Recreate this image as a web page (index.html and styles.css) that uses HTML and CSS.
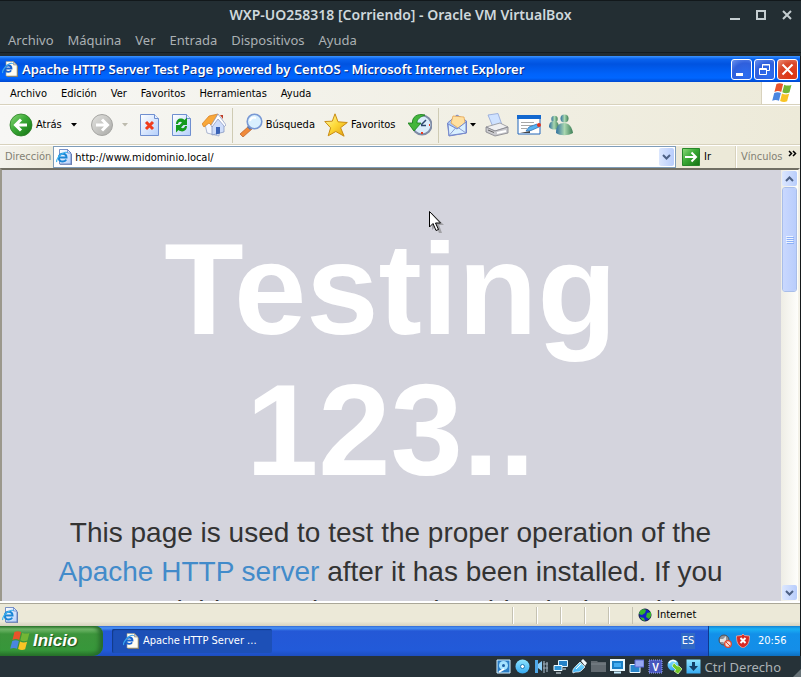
FILE: index.html
```html
<!DOCTYPE html>
<html lang="es">
<head>
<meta charset="utf-8">
<title>WXP-UO258318 [Corriendo] - Oracle VM VirtualBox</title>
<link rel="stylesheet" href="styles.css">
</head>
<body>
<svg class="defs" aria-hidden="true">
  <defs>
    <linearGradient id="green" x1="0" y1="0" x2="1" y2="1"><stop offset="0" stop-color="#8fdc7c"/><stop offset=".45" stop-color="#3aa936"/><stop offset="1" stop-color="#137012"/></linearGradient>
    <linearGradient id="grey" x1="0" y1="0" x2="1" y2="1"><stop offset="0" stop-color="#e4e4e1"/><stop offset="1" stop-color="#a9a9a6"/></linearGradient>
    <linearGradient id="paper" x1="0" y1="0" x2="1" y2="1"><stop offset="0" stop-color="#fff"/><stop offset="1" stop-color="#b5d0fb"/></linearGradient>
    <linearGradient id="gold" x1="0" y1="0" x2="1" y2="1"><stop offset="0" stop-color="#fffdb0"/><stop offset=".5" stop-color="#fdd835"/><stop offset="1" stop-color="#e09a10"/></linearGradient>
    <linearGradient id="buddy" x1="0" y1="0" x2="1" y2="0"><stop offset="0" stop-color="#2f6f9e"/><stop offset=".5" stop-color="#a9d7b0"/><stop offset="1" stop-color="#3c7d55"/></linearGradient>
    <linearGradient id="sky" x1="0" y1="0" x2="0" y2="1"><stop offset="0" stop-color="#8fe4ff"/><stop offset="1" stop-color="#35aaf2"/></linearGradient>
  </defs>
  <symbol id="flag" viewBox="1 1 18 18">
    <path fill="#e8532a" d="M5 2c2-1.300 4-1 6 0L9.300 9C7.300 8 5.300 8 3.200 9z"/>
    <path fill="#72b635" d="M12 2.500c2 1 4 1.200 6.500.2L16.700 9.500c-2.400 1-4.300.8-6.400-.2z"/>
    <path fill="#4a86e0" d="M3 10c2-1 4-1 6 0l-1.700 7c-2-1-4-1-6.100 0z"/>
    <path fill="#f8c425" d="M10 10.400c2 1 4 1.200 6.400.2l-1.800 6.900c-2.300 1-4.200.7-6.300-.3z"/>
  </symbol>
  <symbol id="iepage" viewBox="0 0 16 16">
    <path fill="#7c7a70" d="M5 15h10V5h1v11H5z"/>
    <path fill="#fffef4" stroke="#9a9a88" stroke-width=".6" d="M4 .5h7.500L15 4v11H4z"/>
    <path fill="#c8c8c8" stroke="#777" stroke-width=".5" d="M11.500.5V4H15z"/>
    <path fill="none" stroke="#1762d0" stroke-width="1.800" d="M3 7.500h6.500c0-1.800-1.200-3-3.200-3S3 5.800 3 7.700s1.400 3.200 3.300 3.200c1.300 0 2.300-.5 2.800-1.500"/>
    <path fill="none" stroke="#39a5ee" stroke-width="1.200" d="M.8 12C-.4 10.500 3 5.500 6.500 3.300c2.300-1.300 3.800-1.300 4.200-.5"/>
  </symbol>
  <symbol id="ieblue" viewBox="0 0 16 16">
    <path fill="#6f82ac" d="M4 15.200h11V5h1v11H4z"/>
    <path fill="url(#paper)" stroke="#5877bd" stroke-width=".8" d="M3.500.5h8L15 4v11H3.500z"/>
    <path fill="#dceaff" stroke="#5877bd" stroke-width=".7" d="M11.500.5V4H15z"/>
    <path fill="none" stroke="#1b86d6" stroke-width="2" d="M3 8.500h7.500c0-2.400-1.600-3.700-3.700-3.700S2.800 6.300 2.800 8.700s1.700 3.800 4 3.800c1.600 0 2.800-.7 3.400-1.900"/>
    <path fill="none" stroke="#3fb4ef" stroke-width="1.200" d="M.8 13C-.2 11 3 6.500 7 4.300c2.300-1.300 4-1.300 4.400-.5"/>
  </symbol>
</svg>

<header class="host-head">
  <div class="host-title">
    <h1>WXP-UO258318 [Corriendo] - Oracle VM VirtualBox</h1>
    <div class="host-controls">
      <button aria-label="Minimizar"><svg width="12" height="12"><path d="M1 9h10v2H1z" fill="#c5ced1"/></svg></button>
      <button aria-label="Maximizar"><svg width="12" height="12"><path d="M2 2h8v8H2z" fill="none" stroke="#c5ced1" stroke-width="2"/></svg></button>
      <button aria-label="Cerrar"><svg width="12" height="12"><path d="M2 2l8 8M10 2l-8 8" stroke="#c5ced1" stroke-width="2"/></svg></button>
    </div>
  </div>
  <nav class="host-menu">
    <button>Archivo</button><button>Máquina</button><button>Ver</button><button>Entrada</button><button>Dispositivos</button><button>Ayuda</button>
  </nav>
</header>

<main class="xp">
  <div class="xp-title">
    <svg width="16" height="16"><use href="#iepage"/></svg>
    <h2>Apache HTTP Server Test Page powered by CentOS - Microsoft Internet Explorer</h2>
    <div class="xp-controls">
      <button aria-label="Minimizar ventana"><svg width="21" height="21"><path d="M5 14h7v3H5z" fill="#fff"/></svg></button>
      <button aria-label="Restaurar ventana"><svg width="21" height="21"><path d="M5.500 9.500h7v6h-7zM5 10.500h8M8.500 9V5.500h7v6H13M8 6h8" fill="none" stroke="#fff"/></svg></button>
      <button class="close" aria-label="Cerrar ventana"><svg width="21" height="21"><path d="M5.500 5.500l10 10M15.500 5.500l-10 10" stroke="#fff" stroke-width="2"/></svg></button>
    </div>
  </div>

  <div class="menubar">
    <nav><button>Archivo</button><button>Edición</button><button>Ver</button><button>Favoritos</button><button>Herramientas</button><button>Ayuda</button></nav>
    <div class="throbber"><svg width="20" height="20"><use href="#flag"/></svg></div>
  </div>

  <div class="toolbar">
    <button class="tool"><svg width="24" height="24"><circle cx="12" cy="12" r="11" fill="url(#green)" stroke="#287c22" stroke-width=".8"/><path d="M18 12H7M12 6.500L6.500 12l5.500 5.500" fill="none" stroke="#fff" stroke-width="3"/></svg>Atrás</button>
    <button class="drop" aria-label="Historial atrás"><svg width="7" height="4"><path d="M0 0h6L3 3.500z"/></svg></button>
    <button class="tool fwd" aria-label="Adelante"><svg width="24" height="24"><circle cx="12" cy="12" r="10.500" fill="url(#grey)" stroke="#a5a5a2"/><path d="M6 12h11M12 6.500l5.500 5.500-5.500 5.500" fill="none" stroke="#fff" stroke-width="3"/></svg></button>
    <button class="drop off" aria-label="Historial adelante"><svg width="7" height="4"><path d="M0 0h6L3 3.500z" fill="#bdbbae"/></svg></button>
    <div class="group">
      <button class="tool" aria-label="Detener"><svg width="24" height="24"><path d="M2.500 1.500h14l4 4v17h-18z" fill="url(#paper)" stroke="#6f8fd0"/><path d="M16.500 1.500v4h4" fill="#e7f0ff" stroke="#6f8fd0"/><path d="M8 9l7 7M15 9l-7 7" stroke="#f03c1c" stroke-width="3"/></svg></button>
      <button class="tool" aria-label="Actualizar"><svg width="24" height="24"><path d="M2.500 1.500h14l4 4v17h-18z" fill="url(#paper)" stroke="#6f8fd0"/><path d="M16.500 1.500v4h4" fill="#e7f0ff" stroke="#6f8fd0"/><path d="M6 11c0-5 5-7 8.500-4L17 4.500V12H9.500L12 9.500c-2-1.500-3.500-.5-4 1.500zM17 13c0 5-5 7-8.500 4L6 19.500V12h7.500L11 14.500c2 1.500 3.500.5 4-1.500z" fill="#149a1d"/></svg></button>
      <button class="tool" aria-label="Inicio"><svg width="24" height="24"><path d="M3 11l4-6 10 6v12l-12-3z" fill="#f5f8ff" stroke="#8e9cc0" stroke-width=".7"/><path d="M10 22V12l6-7 6 7v7z" fill="#cfddfa" stroke="#7a8cba" stroke-width=".7"/><path d="M0 11L7 3l9-2-6 12-3-3-5 4z" fill="#f9a83a" stroke="#d37a1c" stroke-width=".7"/><path d="M16 1l8 11-1.500 1.500L16 6l-6 8-1-1.500z" fill="#fff" stroke="#8794bd" stroke-width=".7"/><path d="M14 14h4v6.500l-4 1z" fill="#3a62b6"/><path d="M18 2h3v4z" fill="#bd3d27"/></svg></button>
    </div>
    <span class="rule"></span>
    <button class="tool search"><svg width="24" height="24"><path d="M10 13l3 3-9 8-3-3z" fill="#f08a3a" stroke="#b95c26" stroke-width=".7"/><path d="M9 13l3 3" stroke="#6078a8" stroke-width="3"/><circle cx="15.500" cy="8.500" r="7.300" fill="#d9f0ff" stroke="#7898d4" stroke-width="1.600"/><path d="M11 8c.5-3 3-4 6-3" fill="none" stroke="#fff" stroke-width="2"/></svg>Búsqueda</button>
    <button class="tool star"><svg width="24" height="24"><path d="M11 .8l3 8 9.300.7-6.700 5.200 3.500 8.500-8.300-4.700-7.600 4.300 2.400-8L.8 8.500l7.500-.3z" fill="url(#gold)" stroke="#c98b12"/></svg>Favoritos</button>
    <button class="tool" aria-label="Historial"><svg width="24" height="24"><circle cx="14" cy="12" r="9.500" fill="#d9ecfb" stroke="#7f8ba5" stroke-width="2"/><path d="M13 12l5-5M13 12.500h5" stroke="#2c476e" stroke-width="1.500"/><path d="M14 19v2M21 12h1" stroke="#e83a20" stroke-width="2"/><path d="M17 2C9 0 4 4 4.500 10H0l6 8 7-8H9c0-4 3-6 8-8z" fill="#43b63c" stroke="#187d1b" stroke-width=".8"/></svg></button>
    <span class="rule"></span>
    <button class="tool" aria-label="Correo"><svg width="24" height="24"><path d="M2.500 10L12 2l9.500 6v12L4 23z" fill="#a9c8f7" stroke="#7385c9"/><path d="M6 10l2-7 11 1 1 6-7 5z" fill="#ffe0a0" stroke="#e6a552" stroke-width=".8"/><path d="M3 11l9 5 9-7v11L4 22.500z" fill="#d9f0ff" stroke="#7688cc"/><path d="M4 22.500l7-8M21 20l-8-5.500" stroke="#8b9ad0"/></svg></button>
    <button class="drop mail" aria-label="Opciones de correo"><svg width="7" height="4"><path d="M0 0h6L3 3.500z"/></svg></button>
    <div class="group">
      <button class="tool" aria-label="Imprimir"><svg width="24" height="24"><path d="M3 2l10-1.500L17 12l-9 2z" fill="#cfe2ff" stroke="#8fa5d8" stroke-width=".8"/><path d="M1 14l14-4 8 4-13 4z" fill="#f0f0f1" stroke="#8f8f96" stroke-width=".8"/><path d="M1 14v5l9 4 13-3v-6l-13 4z" fill="#c9c9cd" stroke="#828289" stroke-width=".8"/><path d="M12 20l9-2" stroke="#fff" stroke-width="2"/><path d="M3 17l6 2.500" stroke="#666"/></svg></button>
      <button class="tool" aria-label="Editar"><svg width="24" height="24"><path d="M1 3h22v18H1z" fill="#fff" stroke="#2266ba"/><path d="M0 2h24v4H0z" fill="#1368cf"/><path d="M4 9.500h13M4 12.500h12M4 15.500h6" stroke="#a7a7a7"/><path d="M3 20h10v-2z" fill="#444"/><path d="M9 18l3-4 8-3 2 3-8 3.500z" fill="#58b1ef" stroke="#2366af" stroke-width=".7"/><circle cx="22" cy="12" r="2" fill="#df3721"/></svg></button>
      <button class="tool" aria-label="Messenger"><svg width="24" height="24"><circle cx="5.500" cy="6" r="3.200" fill="url(#buddy)"/><path d="M0 14c0-4 2-6 5-6 4 0 5 3 5 8-4 1-8 1-10-2z" fill="url(#buddy)"/><circle cx="15.500" cy="5.500" r="4" fill="url(#buddy)"/><path d="M7 20c0-7 3-10 8-10s8 4 9 10c-5 3-13 3-17 0z" fill="url(#buddy)"/></svg></button>
    </div>
  </div>

  <form class="address" onsubmit="return false">
    <label for="url">Dirección</label>
    <div class="combo">
      <svg width="16" height="16"><use href="#ieblue"/></svg>
      <input id="url" type="text" value="http://www.midominio.local/">
      <button class="arrow-btn" type="button" aria-label="Desplegar direcciones"><svg width="9" height="6"><path d="M1 1l3.500 3.500L8 1" fill="none" stroke="#4d6185" stroke-width="2"/></svg></button>
    </div>
    <button class="go"><svg width="18" height="18"><path d="M.5.500h17v17H.5z" fill="url(#green)" stroke="#26872a"/><path d="M3 9h11M9.500 4.500L14 9l-4.500 4.500" fill="none" stroke="#fff" stroke-width="2"/></svg>Ir</button>
    <button class="links" type="button">Vínculos <svg width="9" height="7"><path d="M1 1l2.500 2.500L1 6M5 1l2.500 2.500L5 6" fill="none" stroke="#000" stroke-width="1.500"/></svg></button>
  </form>

  <div class="view">
    <article class="page">
      <h1>Testing 123..</h1>
      <p>This page is used to test the proper operation of the <a href="#">Apache HTTP server</a> after it has been installed. If you can read this page it means that this site is working</p>
    </article>
    <div class="scroll">
      <button class="arrow-btn" aria-label="Subir"><svg width="9" height="6"><path d="M1 5l3.500-3.500L8 5" fill="none" stroke="#4d6185" stroke-width="2"/></svg></button>
      <div class="thumb"><svg width="8" height="8"><path d="M0 .5h7M0 2.500h7M0 4.500h7M0 6.500h7" stroke="#eef4fe"/><path d="M1 1.500h7M1 3.500h7M1 5.500h7M1 7.500h7" stroke="#8cb0f8"/></svg></div>
      <button class="arrow-btn last" aria-label="Bajar"><svg width="9" height="6"><path d="M1 1l3.500 3.500L8 1" fill="none" stroke="#4d6185" stroke-width="2"/></svg></button>
    </div>
    <svg class="pointer" width="18" height="24"><path d="M4 3v17l4-4 3 7h3l-3-8h5z" fill="#7778" /><path d="M1.500 1.500v15.500l3.500-3.500 3 7 2.500-1-3-6.500h5z" fill="#fff" stroke="#000"/></svg>
  </div>

  <div class="status">
    <svg width="16" height="16"><use href="#ieblue"/></svg>
    <div class="cells"><i></i><i></i><i></i><i></i><i></i></div>
    <div class="zone"><svg width="14" height="14"><circle cx="7" cy="7" r="6" fill="#1420c8" stroke="#111844"/><path d="M2 3c2-2 5-2 6-1L7 5 4 7 1 6zM9 5l4-1v4l-2 3-3-2zM2 9l4 1 1 3-3-1z" fill="#37b52f"/></svg>Internet</div>
  </div>

  <div class="taskbar">
    <button class="start"><svg width="20" height="20"><use href="#flag"/></svg>Inicio</button>
    <button class="task"><svg width="16" height="16"><use href="#iepage"/></svg>Apache HTTP Server ...</button>
    <button class="lang">ES</button>
    <div class="tray">
      <svg width="14" height="14"><circle cx="6" cy="6" r="5" fill="#8f9298" stroke="#4d4f55"/><path d="M2 5h3l3-3v8L5 8H2z" fill="#e3e3e3"/><circle cx="10" cy="10" r="3.300" fill="#f7d9d3" stroke="#e0472e" stroke-width="1.300"/><path d="M8 8l4 4" stroke="#e0472e"/></svg>
      <svg width="14" height="14"><path d="M7 0l1.500 1.500 5 .5c0 6-1 9.500-6.500 12C1.500 11.500.5 8 .5 2l5-.5z" fill="#d92a24" stroke="#e9b0a8" stroke-width=".8"/><path d="M4.500 4l5 5M9.500 4l-5 5" stroke="#fff" stroke-width="2"/></svg>
      <time>20:56</time>
    </div>
  </div>
</main>

<footer class="host-status">
  <svg width="15" height="15"><path d="M1 1h13v13H1z" fill="#2a7cc4" stroke="#d5f2ff"/><circle cx="7.500" cy="6.500" r="4.500" fill="#a5e2ff"/><circle cx="7.500" cy="6.500" r="1.500" fill="#1d60a5"/><path d="M3 13l5-3" stroke="#fff" stroke-width="2"/></svg>
  <svg width="15" height="15"><circle cx="7.500" cy="7.500" r="7" fill="url(#sky)"/><circle cx="7.500" cy="7.500" r="2" fill="#fff" stroke="#1c77b4"/></svg>
  <svg width="15" height="15"><path d="M1 1h3v13H1z" fill="#4fa8e8"/><path d="M4 5l4-3v10L4 9z" fill="#8dcff8"/><path d="M9 2h2v12H9zM12 3h2v10h-2z" fill="#6c7b86"/><path d="M9 5h5M9 9h5" stroke="#9aabb6"/></svg>
  <svg width="15" height="15"><path d="M5.500 1.500h9v6h-9z" fill="#2581c6" stroke="#def5ff"/><path d="M1 6.500h8v5H1zM3 14h5" fill="#2e96da" stroke="#eefaff"/><path d="M10 10h3" stroke="#def5ff"/></svg>
  <svg width="15" height="15"><path d="M1 14c-1-3 1-5 3-7l4-4 5 5-4 4c-3 2-5 0-8 2z" fill="url(#sky)" stroke="#fff" stroke-width=".7"/><path d="M9 2l2-2 4 4-2 3z" fill="#f2f8fb"/><path d="M4 10l5-5" stroke="#fff"/></svg>
  <svg width="15" height="15"><path d="M0 2h6l1 1h8v10H0z" fill="#626a70"/><path d="M0 5h15" stroke="#7c858b"/></svg>
  <svg width="15" height="15"><path d="M1 1h13v10H1z" fill="#1a7fc5" stroke="#eaf9ff" stroke-width="2"/><path d="M4 4h7v4H4z" fill="#43adf0"/><path d="M4 13.500h7" stroke="#c8efff" stroke-width="2"/></svg>
  <svg width="15" height="15"><path d="M1 5.500h10v8H1z" fill="#2785cc" stroke="#eefaff"/><path d="M6 1h9v7H6z" fill="#98a8f1" stroke="#5667d4"/></svg>
  <svg width="15" height="15"><path d="M1 1h13v13H1z" fill="#4856bd" stroke="#9eacfa" stroke-dasharray="1 1"/><text x="7.500" y="11.500" text-anchor="middle" class="chip">V</text></svg>
  <svg width="15" height="15"><circle cx="6" cy="6" r="5.500" fill="url(#sky)"/><path d="M2 4c2-3 5-3 7-1" fill="none" stroke="#fff" stroke-width="1.500"/><path d="M7 4l3 3h2l3 3-4 5-4-3 2-1-4-4z" fill="#72c827" stroke="#e8ffd7" stroke-width=".7"/></svg>
  <svg width="15" height="15"><path d="M.5.500h14v14H.5z" fill="url(#sky)"/><path d="M6 3h3v4h3l-4.500 5L3 7h3z" fill="#123e66"/></svg>
  <span>Ctrl Derecho</span>
  <svg class="grip" width="8" height="8"><path d="M8 0v8H0z" fill="#677277"/></svg>
</footer>
</body>
</html>
```
FILE: styles.css
```css
* { box-sizing: border-box; }
body {
  margin: 0;
  height: 100vh;
  display: flex;
  flex-direction: column;
  overflow: hidden;
  background: #232e33;
  font: 11px/14px "DejaVu Sans Condensed", "Liberation Sans", sans-serif;
  color: #000;
}
h1, h2, p { margin: 0; font: inherit; }
button { border: 0; padding: 0; margin: 0; background: none; font: inherit; color: inherit; white-space: nowrap; }
svg { display: block; flex: none; }
.defs { position: absolute; width: 0; height: 0; }

/* VirtualBox window */
.host-head { flex: none; height: 56px; border-top: 1px solid #12181b; border-bottom: 3px solid #222c31; font-family: "Noto Sans", sans-serif; }
.host-title { display: grid; grid-template-columns: 1fr auto 1fr; align-items: center; height: 27px; color: #cfd8dc; }
.host-title h1 { grid-column: 2; font-size: 14px; font-weight: 600; line-height: 20px; }
.host-controls { display: flex; justify-content: flex-end; gap: 14px; padding-right: 8px; }
.host-menu { display: flex; gap: 14px; padding: 2px 8px 0; height: 25px; border-bottom: 1px solid #151c20; font-size: 13px; line-height: 20px; color: #abb1b4; }
.host-menu button { height: 20px; }

.xp { flex: 1 1 0; min-height: 0; display: flex; flex-direction: column; border-right: 1px solid #15191b; background: #ece9d8; }
.xp > div, .xp > form { flex: none; }

.xp-title {
  display: flex; align-items: center; gap: 4px; height: 26px; padding: 0 2px;
  background: linear-gradient(#3d95ff, #0a63ee 3px, #0053e0 8px, #0063fb 18px, #0066ff 22px, #0048d0);
  color: #fff;
}
.xp-title h2 { flex: 1; font: 600 13px/16px "Noto Sans", sans-serif; text-shadow: 1px 1px #0a2a80; white-space: nowrap; }
.xp-controls { display: flex; gap: 2px; }
.xp-controls button { width: 21px; height: 21px; border: 1px solid #fff; border-radius: 3px; background: radial-gradient(circle at 70% 80%, #2c6df0, #2f5fdc 60%, #6d93ee); }
.xp-controls svg { margin: -1px; }
.xp-controls .close { background: radial-gradient(circle at 70% 80%, #e0340e, #d9492c 60%, #ec9078); }

.menubar { display: flex; height: 23px; border-bottom: 1px solid #d8d2bd; background: linear-gradient(90deg, #f7f7f5, #edead9); }
.menubar nav { flex: 1; display: flex; gap: 14px; padding: 1px 10px 0; }
.throbber { width: 39px; padding: 1px 10px; background: #fff; border-left: 1px solid #d8d2bd; }

.toolbar { display: flex; align-items: center; height: 40px; padding-left: 9px; border-top: 1px solid #fff; border-bottom: 1px solid #d8d2bd; background: linear-gradient(90deg, #f7f7f5, #edead9); }
.tool { display: flex; align-items: center; gap: 3px; height: 24px; }
.drop { height: 24px; margin: 0 12px 0 9px; }
.drop.off { margin: 0 9px 0 8px; }
.drop.mail { margin: 0 8px 0 1px; }
.group { display: flex; gap: 8px; }
.rule { width: 1px; height: 35px; margin: 0 6px 0 6px; background: #cfcbb4; }
.star { margin: 0 12px 0 9px; }

.address { display: flex; align-items: center; height: 23px; border-top: 1px solid #fff; background: linear-gradient(90deg, #f3f2ec, #ece9d8 60px); }
.address label { padding: 0 2px 0 5px; color: #827f74; }
.combo { flex: 1; display: flex; align-items: center; height: 22px; padding: 1px 1px 1px 2px; border: 1px solid #7f9db9; background: #fff; }
.combo input { flex: 1; min-width: 0; border: 0; padding: 2px 3px 0; outline: 0; font: inherit; background: none; }
.arrow-btn { display: flex; align-items: center; justify-content: center; width: 15px; height: 18px; border-radius: 2px; background: linear-gradient(90deg, #dce7fe, #b8cdfc); }
.go { display: flex; align-items: center; gap: 4px; width: 60px; padding-left: 6px; }
.links { display: flex; gap: 6px; width: 64px; height: 22px; padding: 4px 2px 0 4px; border-left: 1px solid #fff; box-shadow: -1px 0 #d8d2bd; color: #827f74; }

/* Document area */
.xp > .view { position: relative; flex: 1 1 0; min-height: 0; display: flex; border: solid #716f64; border-width: 2px 2px 0 2px; border-color: #716f64 #f3f1e7 #fff #9b988c; }
.page { flex: 1; overflow: hidden; padding: 49px 48px 0 46px; background: #d4d4dd; font-family: "Liberation Sans", sans-serif; text-align: center; }
.page h1 { font-size: 130px; line-height: 141px; font-weight: bold; color: #fff; }
.page p { margin-top: 12px; font-size: 28px; line-height: 39px; color: #333; }
.page a { color: #428bca; text-decoration: none; }
.scroll { width: 17px; display: flex; flex-direction: column; align-items: center; padding: 1px 0; background: linear-gradient(90deg, #eeede5, #fefefb); }
.scroll .arrow-btn { height: 15px; }
.scroll .last { margin-top: auto; }
.thumb { display: flex; align-items: center; justify-content: center; width: 15px; height: 105px; margin-top: 1px; border: 1px solid #fff; outline: 1px solid #a9bee9; outline-offset: -1px; border-radius: 3px; background: linear-gradient(90deg, #c9d8fe, #b9cdfc); }
.pointer { position: absolute; left: 426px; top: 40px; }

.status { display: flex; align-items: center; height: 25px; padding: 1px 2px 0; border-top: 2px solid #fff; box-shadow: inset 0 1px #aaa798; background: linear-gradient(#ece9d8 80%, #d6d2bf); }
.cells { flex: 1; display: flex; justify-content: flex-end; }
.cells i { width: 24px; height: 17px; border-left: 1px solid #c5c2b2; box-shadow: inset 1px 0 #fff; }
.zone { display: flex; align-items: center; gap: 5px; width: 166px; height: 17px; padding-left: 5px; border-left: 1px solid #c5c2b2; }

.taskbar { display: flex; align-items: center; height: 30px; background: linear-gradient(#3168d5, #4993f5 2px, #2458d6 5px, #225ad9 24px, #1d4ec0); color: #fff; }
.start { display: flex; align-items: center; gap: 3px; width: 103px; height: 30px; padding-left: 10px; border-radius: 0 8px 10px 0; background: linear-gradient(#2f7a2d, #73b96c 3px, #3c943b 8px, #37973a 24px, #26742a); box-shadow: inset -4px 0 4px #276b2b; font: italic bold 17px/24px "Liberation Sans", sans-serif; text-shadow: 1px 1px 1px #1c4a1c; }
.task { display: flex; align-items: center; gap: 4px; width: 160px; height: 24px; margin-left: 9px; padding-left: 11px; border-radius: 2px; background: #1d50b7; box-shadow: inset 1px 1px 1px #133a87; }
.lang { width: 14px; height: 16px; margin: 0 13px 0 auto; background: #316ac5; display: flex; justify-content: center; align-items: center; }
.tray { display: flex; align-items: center; gap: 4px; width: 92px; height: 30px; padding-left: 9px; border-left: 1px solid #0d3a8e; background: linear-gradient(#1482d3, #1ab0f4 3px, #1290e9 8px, #148ee8 24px, #0d6fc0); }
.tray time { margin-left: 4px; }

.host-status { flex: none; display: flex; align-items: center; justify-content: flex-end; gap: 4px; height: 21px; background: #263238; color: #abb1b4; font: 13px/20px "Noto Sans", sans-serif; }
.host-status .grip { align-self: flex-end; margin-left: 8px; }
.chip { font: bold 10px "Liberation Sans", sans-serif; fill: #fff; }
```
